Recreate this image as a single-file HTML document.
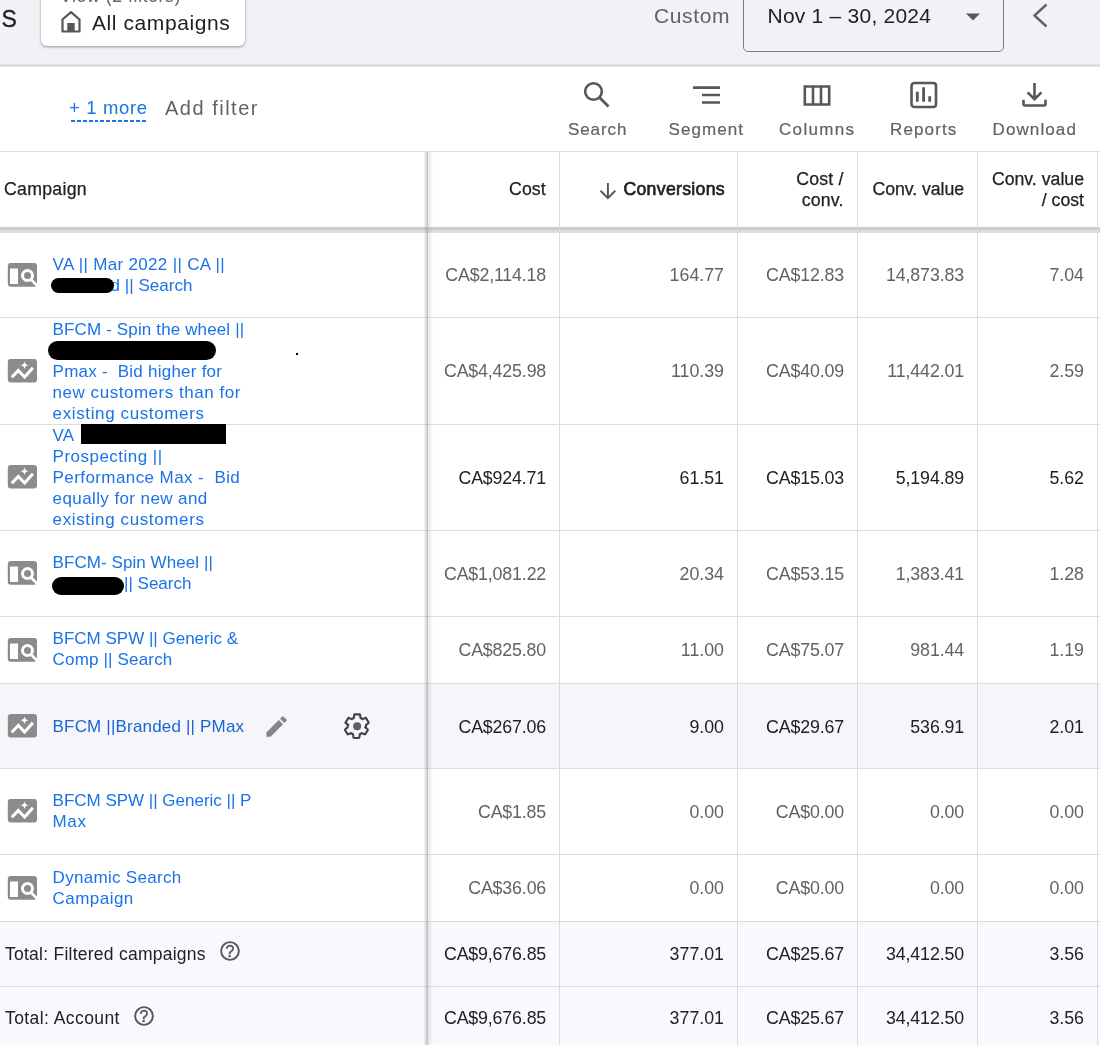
<!DOCTYPE html>
<html>
<head>
<meta charset="utf-8">
<title>Campaigns</title>
<style>
*{box-sizing:border-box;margin:0;padding:0}
html,body{width:1100px;height:1045px;overflow:hidden;background:#fff}
body{position:relative;font-family:"Liberation Sans",sans-serif;color:#202124;will-change:transform}
.abs{position:absolute}
#topbar{position:absolute;left:0;top:0;width:1100px;height:65px;background:#f2f1f6}
#topline{position:absolute;left:0;top:64px;width:1100px;height:3px;background:linear-gradient(#e6e5ea,#d9d8dd 50%,#ebebee)}
#allc{position:absolute;left:41px;top:-10px;width:204.300px;height:55.500px;background:#fff;border-radius:6px;box-shadow:0 1px 3px rgba(60,64,67,.35),0 1px 2px rgba(60,64,67,.2)}
#datebox{position:absolute;left:743px;top:-10px;width:261px;height:61.700px;border:1.500px solid #7b7c82;border-radius:5px}
.t{position:absolute;white-space:nowrap;line-height:1}
.tl{position:absolute;top:120px;font-size:17px;color:#5f6368;-webkit-text-stroke:.2px #5f6368;white-space:nowrap;line-height:20px;letter-spacing:.6px}
.hl{position:absolute;left:0;width:1100px;height:1px;background:#dcdbe0}
.vl{position:absolute;top:152px;width:1px;height:893px;background:#dcdbe0}
.row{position:absolute;left:0;width:1100px}
.num{position:absolute;white-space:nowrap;font-size:17.8px;line-height:20px;color:#5f6368;text-align:right}
.dk .num{color:#202124}
.c1{right:553.900px;letter-spacing:-.15px}.c2{right:376px}.c3{right:255.900px;letter-spacing:-.12px}.c4{right:135.900px;letter-spacing:-.1px}.c5{right:16px}
.name{position:absolute;left:52.600px;font-size:17.0px;line-height:21px;color:#1a73e8;white-space:nowrap}
.hd{position:absolute;font-size:17.7px;line-height:21px;color:#202124;text-align:right;white-space:nowrap;-webkit-text-stroke:.25px #202124}
.ico{position:absolute;left:7px}
.red{position:absolute;background:#000}
.r6 .name{color:#1966d2}
</style>
</head>
<body>

<div id="topbar"></div>
<div id="topline"></div>
<div id="allc"></div>
<div id="datebox"></div>
<div class="t" id="tS" style="left:1.500px;top:8px;font-size:23px;color:#202124;-webkit-text-stroke:.35px #202124">S</div>
<div class="t" id="tView" style="left:60px;top:-12.500px;font-size:17.500px;color:#5f6368;letter-spacing:.65px">View (2 filters)</div>
<svg class="abs" style="left:60px;top:10px" width="22" height="23" viewBox="0 0 22 23"><path d="M2.500 21.500V9.500L11 2.200l8.500 7.300v12z" fill="none" stroke="#55565a" stroke-width="2.200" stroke-linejoin="round"/><rect x="7.300" y="13" width="7.400" height="8.500" fill="#55565a"/></svg>
<div class="t" id="tAll" style="left:92px;top:12px;font-size:21px;color:#202124;letter-spacing:0.583px;">All campaigns</div>
<div class="t" id="tCustom" style="left:654px;top:4.500px;font-size:21px;color:#5f6368;letter-spacing:0.640px;">Custom</div>
<div class="t" id="tDate" style="left:767.500px;top:4.500px;font-size:21px;color:#202124;letter-spacing:0.234px;">Nov 1 &ndash; 30, 2024</div>
<svg class="abs" style="left:964.500px;top:12.700px" width="16" height="8" viewBox="0 0 16 8"><path d="M1 0.500h14L8 7.500z" fill="#55575a"/></svg>
<svg class="abs" style="left:1028px;top:0" width="24" height="32" viewBox="0 0 24 32"><path d="M18.500 4.500L6.500 15.500l12 11" fill="none" stroke="#5f6368" stroke-width="2.400"/></svg>
<div class="t" id="tMore" style="left:69px;top:99px;font-size:18.500px;color:#1a73e8;letter-spacing:0.643px;">+ 1 more</div>
<div class="abs" style="left:70.500px;top:119.500px;width:76.500px;height:2px;background:repeating-linear-gradient(90deg,#1a73e8 0,#1a73e8 3.900px,transparent 3.900px,transparent 5.900px)"></div>
<div class="t" id="tAdd" style="left:165px;top:98px;font-size:20px;color:#5f6368;letter-spacing:1.500px;">Add filter</div>
<svg class="abs" style="left:579.400px;top:77.100px" width="34" height="34" viewBox="0 0 34 34"><circle cx="14.500" cy="14.500" r="8.300" fill="none" stroke="#55575a" stroke-width="2.600"/><path d="M20.500 20.500L29.500 29.500" stroke="#55575a" stroke-width="2.800"/></svg>
<svg class="abs" style="left:690px;top:82px" width="34" height="26" viewBox="0 0 34 26"><path d="M3 5.600h27M12 13h18M12 20.500h18" stroke="#55575a" stroke-width="2.700"/></svg>
<svg class="abs" style="left:802px;top:83px" width="30" height="26" viewBox="0 0 30 26"><path d="M2.800 3.500h24.400v18H2.800zM11 3.500v18M19 3.500v18" fill="none" stroke="#55575a" stroke-width="2.600"/></svg>
<svg class="abs" style="left:908px;top:80px" width="32" height="30" viewBox="0 0 32 30"><rect x="3.500" y="3" width="24.500" height="24" rx="2.800" fill="none" stroke="#55575a" stroke-width="2.600"/><path d="M9.300 11.700v10M15.600 7.300v14.400M21.700 16.200v5.500" stroke="#55575a" stroke-width="2.800"/></svg>
<svg class="abs" style="left:1019px;top:80px" width="32" height="30" viewBox="0 0 32 30"><path d="M15.500 3v15.500M8.600 12.300l6.900 6.900 6.900-6.900M4.500 19.700v4.300q0 1.500 1.500 1.500h19q1.500 0 1.500-1.500v-4.300" fill="none" stroke="#55575a" stroke-width="2.600"/></svg>
<div class="tl" id="tl1" style="left:568px;letter-spacing:0.900px;">Search</div>
<div class="tl" id="tl2" style="left:668.500px;letter-spacing:1.084px;">Segment</div>
<div class="tl" id="tl3" style="left:779px;letter-spacing:1.334px;">Columns</div>
<div class="tl" id="tl4" style="left:890px;letter-spacing:1.132px;">Reports</div>
<div class="tl" id="tl5" style="left:992.500px;letter-spacing:1.113px;">Download</div>
<div class="hd" id="h0" style="left:4px;top:179px;text-align:left;letter-spacing:0.285px;">Campaign</div>
<div class="hd" id="h1" style="right:554.300px;top:179px;letter-spacing:0.067px;">Cost</div>
<svg class="abs" style="left:598px;top:181px" width="20" height="20" viewBox="0 0 20 20"><path d="M9.900 2v15.200M2.500 9.800l7.400 7.400 7.400-7.400" fill="none" stroke="#55575a" stroke-width="1.950"/></svg>
<div class="hd" id="h2" style="right:375px;top:179px;-webkit-text-stroke:.65px #202124;letter-spacing:0.300px;">Conversions</div>
<div class="hd" id="h3" style="right:256.300px;top:169px;letter-spacing:0.200px;">Cost /<br>conv.</div>
<div class="hd" id="h4" style="right:136px;top:179px;letter-spacing:-0.050px;">Conv. value</div>
<div class="hd" id="h5" style="right:16px;top:169px;letter-spacing:0.001px;">Conv. value<br>/ cost</div>

<div class="row" style="top:684px;height:84px;background:#f6f5fa"></div>
<div class="row" style="top:922px;height:123px;background:#f9f8fc"></div>
<div class="hl" style="top:151px"></div>
<div class="hl" style="top:226.600px;height:6.500px;background:linear-gradient(#d3d6d7 0,#c8cbcc 12%,#c8cbcc 40%,#d9dcdd 52%,#dbdedf 90%,#e4e6e7 100%)"></div>
<div class="hl" style="top:317px"></div>
<div class="hl" style="top:424px"></div>
<div class="hl" style="top:530px"></div>
<div class="hl" style="top:615.500px"></div>
<div class="hl" style="top:683px"></div>
<div class="hl" style="top:768px"></div>
<div class="hl" style="top:854px"></div>
<div class="hl" style="top:921px"></div>
<div class="hl" style="top:985.500px"></div>
<div class="vl" style="left:424px;width:9px;background:linear-gradient(90deg,rgba(160,158,168,0) 0,rgba(160,158,168,.30) 1.100px,rgba(158,156,165,.40) 2.600px,rgba(150,148,156,.56) 3.200px,rgba(150,148,156,.56) 3.800px,rgba(160,158,168,.24) 4.500px,rgba(160,158,168,.15) 6px,rgba(160,158,168,.05) 8px,rgba(160,158,168,0) 9px)"></div>
<div class="vl" style="left:559px"></div>
<div class="vl" style="left:737px"></div>
<div class="vl" style="left:857px"></div>
<div class="vl" style="left:977px"></div>
<div class="vl" style="left:1097px"></div>
<div class="r1">
<svg class="ico" style="top:262px" width="32" height="26" viewBox="0 0 32 26"><rect x="0.800" y="1" width="29.200" height="23.800" rx="3" fill="#8b8b8c"/><rect x="3" y="6.500" width="8" height="15.500" fill="#fff"/><circle cx="20.500" cy="13.500" r="5" fill="none" stroke="#fff" stroke-width="3"/><path d="M24 17.500l6.500 6.500" stroke="#fff" stroke-width="2.600"/></svg>
<div class="name" id="n1_0" style="top:254px;letter-spacing:0.318px;">VA || Mar 2022 || CA ||</div>
<div class="name" id="n1_1" style="top:275px;left:110.5px;letter-spacing:0.040px;">d || Search</div>
<div class="num c1" id="v1_1" style="top:265px;">CA$2,114.18</div>
<div class="num c2" id="v1_2" style="top:265px;">164.77</div>
<div class="num c3" id="v1_3" style="top:265px;">CA$12.83</div>
<div class="num c4" id="v1_4" style="top:265px;">14,873.83</div>
<div class="num c5" id="v1_5" style="top:265px;">7.04</div>
</div>
<div class="r2">
<svg class="ico" style="top:358px" width="32" height="26" viewBox="0 0 32 26"><rect x="0.800" y="1" width="29.200" height="23.500" rx="3" fill="#8b8b8c"/><path d="M4.800 19.300l6.500-6.800 6.300 6.500 8.300-9.300" fill="none" stroke="#fff" stroke-width="3" stroke-linejoin="miter"/><path d="M17.500 3.300c.5 2.600 1.400 3.500 4 4-2.600.5-3.500 1.400-4 4-.5-2.600-1.400-3.500-4-4 2.600-.5 3.500-1.400 4-4z" fill="#fff"/></svg>
<div class="name" id="n2_0" style="top:319px;letter-spacing:0.138px;">BFCM - Spin the wheel ||</div>
<div class="name" id="n2_1" style="top:361px;letter-spacing:0.237px;">Pmax - &nbsp;Bid higher for</div>
<div class="name" id="n2_2" style="top:382px;letter-spacing:0.530px;">new customers than for</div>
<div class="name" id="n2_3" style="top:403px;letter-spacing:0.621px;">existing customers</div>
<div class="num c1" id="v2_1" style="top:361px;">CA$4,425.98</div>
<div class="num c2" id="v2_2" style="top:361px;">110.39</div>
<div class="num c3" id="v2_3" style="top:361px;">CA$40.09</div>
<div class="num c4" id="v2_4" style="top:361px;">11,442.01</div>
<div class="num c5" id="v2_5" style="top:361px;">2.59</div>
</div>
<div class="r3 dk">
<svg class="ico" style="top:464.1px" width="32" height="26" viewBox="0 0 32 26"><rect x="0.800" y="1" width="29.200" height="23.500" rx="3" fill="#8b8b8c"/><path d="M4.800 19.300l6.500-6.800 6.300 6.500 8.300-9.300" fill="none" stroke="#fff" stroke-width="3" stroke-linejoin="miter"/><path d="M17.500 3.300c.5 2.600 1.400 3.500 4 4-2.600.5-3.500 1.400-4 4-.5-2.600-1.400-3.500-4-4 2.600-.5 3.500-1.400 4-4z" fill="#fff"/></svg>
<div class="name" id="n3_0" style="top:425px;letter-spacing:0.200px;">VA</div>
<div class="name" id="n3_1" style="top:446px;letter-spacing:0.480px;">Prospecting ||</div>
<div class="name" id="n3_2" style="top:467px;letter-spacing:0.413px;">Performance Max - &nbsp;Bid</div>
<div class="name" id="n3_3" style="top:488px;letter-spacing:0.399px;">equally for new and</div>
<div class="name" id="n3_4" style="top:509px;letter-spacing:0.621px;">existing customers</div>
<div class="num c1" id="v3_1" style="top:468px;">CA$924.71</div>
<div class="num c2" id="v3_2" style="top:468px;">61.51</div>
<div class="num c3" id="v3_3" style="top:468px;">CA$15.03</div>
<div class="num c4" id="v3_4" style="top:468px;">5,194.89</div>
<div class="num c5" id="v3_5" style="top:468px;">5.62</div>
</div>
<div class="r4">
<svg class="ico" style="top:560.2px" width="32" height="26" viewBox="0 0 32 26"><rect x="0.800" y="1" width="29.200" height="23.800" rx="3" fill="#8b8b8c"/><rect x="3" y="6.500" width="8" height="15.500" fill="#fff"/><circle cx="20.500" cy="13.500" r="5" fill="none" stroke="#fff" stroke-width="3"/><path d="M24 17.500l6.500 6.500" stroke="#fff" stroke-width="2.600"/></svg>
<div class="name" id="n4_0" style="top:552px;letter-spacing:0.067px;">BFCM- Spin Wheel ||</div>
<div class="name" id="n4_1" style="top:573px;left:124px;">|| Search</div>
<div class="num c1" id="v4_1" style="top:564px;">CA$1,081.22</div>
<div class="num c2" id="v4_2" style="top:564px;">20.34</div>
<div class="num c3" id="v4_3" style="top:564px;">CA$53.15</div>
<div class="num c4" id="v4_4" style="top:564px;">1,383.41</div>
<div class="num c5" id="v4_5" style="top:564px;">1.28</div>
</div>
<div class="r5">
<svg class="ico" style="top:636.7px" width="32" height="26" viewBox="0 0 32 26"><rect x="0.800" y="1" width="29.200" height="23.800" rx="3" fill="#8b8b8c"/><rect x="3" y="6.500" width="8" height="15.500" fill="#fff"/><circle cx="20.500" cy="13.500" r="5" fill="none" stroke="#fff" stroke-width="3"/><path d="M24 17.500l6.500 6.500" stroke="#fff" stroke-width="2.600"/></svg>
<div class="name" id="n5_0" style="top:628px;">BFCM SPW || Generic &amp;</div>
<div class="name" id="n5_1" style="top:649px;letter-spacing:0.172px;">Comp || Search</div>
<div class="num c1" id="v5_1" style="top:640px;">CA$825.80</div>
<div class="num c2" id="v5_2" style="top:640px;">11.00</div>
<div class="num c3" id="v5_3" style="top:640px;">CA$75.07</div>
<div class="num c4" id="v5_4" style="top:640px;">981.44</div>
<div class="num c5" id="v5_5" style="top:640px;">1.19</div>
</div>
<div class="r6 dk">
<svg class="ico" style="top:713.1px" width="32" height="26" viewBox="0 0 32 26"><rect x="0.800" y="1" width="29.200" height="23.500" rx="3" fill="#8b8b8c"/><path d="M4.800 19.300l6.500-6.800 6.300 6.500 8.300-9.300" fill="none" stroke="#fff" stroke-width="3" stroke-linejoin="miter"/><path d="M17.500 3.300c.5 2.600 1.400 3.500 4 4-2.600.5-3.500 1.400-4 4-.5-2.600-1.400-3.500-4-4 2.600-.5 3.500-1.400 4-4z" fill="#fff"/></svg>
<div class="name" id="n6_0" style="top:716px;letter-spacing:0.177px;">BFCM ||Branded || PMax</div>
<div class="num c1" id="v6_1" style="top:717px;">CA$267.06</div>
<div class="num c2" id="v6_2" style="top:717px;">9.00</div>
<div class="num c3" id="v6_3" style="top:717px;">CA$29.67</div>
<div class="num c4" id="v6_4" style="top:717px;">536.91</div>
<div class="num c5" id="v6_5" style="top:717px;">2.01</div>
</div>
<div class="r7">
<svg class="ico" style="top:798.3px" width="32" height="26" viewBox="0 0 32 26"><rect x="0.800" y="1" width="29.200" height="23.500" rx="3" fill="#8b8b8c"/><path d="M4.800 19.300l6.500-6.800 6.300 6.500 8.300-9.300" fill="none" stroke="#fff" stroke-width="3" stroke-linejoin="miter"/><path d="M17.500 3.300c.5 2.600 1.400 3.500 4 4-2.600.5-3.500 1.400-4 4-.5-2.600-1.400-3.500-4-4 2.600-.5 3.500-1.400 4-4z" fill="#fff"/></svg>
<div class="name" id="n7_0" style="top:790px;letter-spacing:-0.010px;">BFCM SPW || Generic || P</div>
<div class="name" id="n7_1" style="top:811px;letter-spacing:0.600px;">Max</div>
<div class="num c1" id="v7_1" style="top:802px;">CA$1.85</div>
<div class="num c2" id="v7_2" style="top:802px;">0.00</div>
<div class="num c3" id="v7_3" style="top:802px;">CA$0.00</div>
<div class="num c4" id="v7_4" style="top:802px;">0.00</div>
<div class="num c5" id="v7_5" style="top:802px;">0.00</div>
</div>
<div class="r8">
<svg class="ico" style="top:875px" width="32" height="26" viewBox="0 0 32 26"><rect x="0.800" y="1" width="29.200" height="23.800" rx="3" fill="#8b8b8c"/><rect x="3" y="6.500" width="8" height="15.500" fill="#fff"/><circle cx="20.500" cy="13.500" r="5" fill="none" stroke="#fff" stroke-width="3"/><path d="M24 17.500l6.500 6.500" stroke="#fff" stroke-width="2.600"/></svg>
<div class="name" id="n8_0" style="top:867px;letter-spacing:0.298px;">Dynamic Search</div>
<div class="name" id="n8_1" style="top:888px;letter-spacing:0.454px;">Campaign</div>
<div class="num c1" id="v8_1" style="top:878px;">CA$36.06</div>
<div class="num c2" id="v8_2" style="top:878px;">0.00</div>
<div class="num c3" id="v8_3" style="top:878px;">CA$0.00</div>
<div class="num c4" id="v8_4" style="top:878px;">0.00</div>
<div class="num c5" id="v8_5" style="top:878px;">0.00</div>
</div>
<div class="r9 dk">
<div class="num c1" id="v9_1" style="top:944px;">CA$9,676.85</div>
<div class="num c2" id="v9_2" style="top:944px;">377.01</div>
<div class="num c3" id="v9_3" style="top:944px;">CA$25.67</div>
<div class="num c4" id="v9_4" style="top:944px;">34,412.50</div>
<div class="num c5" id="v9_5" style="top:944px;">3.56</div>
</div>
<div class="r10 dk">
<div class="num c1" id="v10_1" style="top:1008px;">CA$9,676.85</div>
<div class="num c2" id="v10_2" style="top:1008px;">377.01</div>
<div class="num c3" id="v10_3" style="top:1008px;">CA$25.67</div>
<div class="num c4" id="v10_4" style="top:1008px;">34,412.50</div>
<div class="num c5" id="v10_5" style="top:1008px;">3.56</div>
</div>
<div class="red" style="left:51px;top:277.500px;width:62.500px;height:15.500px;border-radius:8px"></div>
<div class="red" style="left:48px;top:340.500px;width:168px;height:19.500px;border-radius:10px"></div>
<div class="red" style="left:296px;top:352.500px;width:2px;height:2px"></div>
<div class="red" style="left:81px;top:424.200px;width:145px;height:20.300px"></div>
<div class="red" style="left:52.300px;top:576.700px;width:71.700px;height:18.500px;border-radius:9.250px"></div>
<svg class="abs" style="left:263.400px;top:712.600px" width="27" height="27" viewBox="0 0 24 24"><path d="M3 17.250V21h3.750L17.810 9.940l-3.750-3.750L3 17.250zM20.710 7.040a.996.996 0 0 0 0-1.410l-2.340-2.340a.996.996 0 0 0-1.410 0l-1.830 1.830 3.750 3.750 1.830-1.830z" fill="#858586"/></svg>
<svg class="abs" style="left:343.100px;top:711.650px" width="28.300" height="28.300" viewBox="0 0 24 24"><path d="M19.430 12.980c.04-.32.070-.64.070-.98 0-.34-.03-.66-.07-.98l2.110-1.650c.19-.15.240-.42.120-.64l-2-3.460a.5.5 0 0 0-.61-.22l-2.490 1c-.52-.4-1.080-.73-1.690-.98l-.38-2.650A.488.488 0 0 0 14 2h-4c-.25 0-.46.180-.49.420l-.38 2.650c-.61.250-1.170.59-1.690.98l-2.490-1a.566.566 0 0 0-.18-.03c-.17 0-.34.090-.43.250l-2 3.460c-.13.220-.7.490.12.640l2.110 1.650c-.4.320-.7.650-.7.980 0 .33.030.66.070.98l-2.110 1.650c-.19.150-.24.420-.12.640l2 3.460a.5.5 0 0 0 .61.220l2.490-1c.52.400 1.080.73 1.690.98l.38 2.650c.3.240.24.420.49.420h4c.25 0 .46-.18.490-.42l.38-2.650c.61-.25 1.170-.59 1.690-.98l2.490 1c.06.020.12.030.18.030.17 0 .34-.9.430-.25l2-3.460c.12-.22.070-.49-.12-.64l-2.110-1.650z" fill="none" stroke="#3f4145" stroke-width="1.800" stroke-linejoin="round"/><circle cx="12" cy="12" r="3.400" fill="#5d5f63"/></svg>
<div class="t" id="tot1" style="left:5px;top:944px;font-size:17.500px;color:#202124;line-height:20px;letter-spacing:0.250px;">Total: Filtered campaigns</div>
<div class="t" id="tot2" style="left:5px;top:1008px;font-size:17.500px;color:#202124;line-height:20px;letter-spacing:0.423px;">Total: Account</div>
<svg class="abs" style="left:219.050px;top:940.300px" width="22" height="22" viewBox="0 0 22 22"><circle cx="11" cy="11" r="8.850" fill="none" stroke="#55575a" stroke-width="1.900"/><text x="11" y="16.600" text-anchor="middle" font-family="Liberation Sans, sans-serif" font-size="15.800" fill="#55575a" stroke="#55575a" stroke-width=".5">?</text></svg>
<svg class="abs" style="left:132.800px;top:1004.600px" width="22" height="22" viewBox="0 0 22 22"><circle cx="11" cy="11" r="8.850" fill="none" stroke="#55575a" stroke-width="1.900"/><text x="11" y="16.600" text-anchor="middle" font-family="Liberation Sans, sans-serif" font-size="15.800" fill="#55575a" stroke="#55575a" stroke-width=".5">?</text></svg>
</body>
</html>
